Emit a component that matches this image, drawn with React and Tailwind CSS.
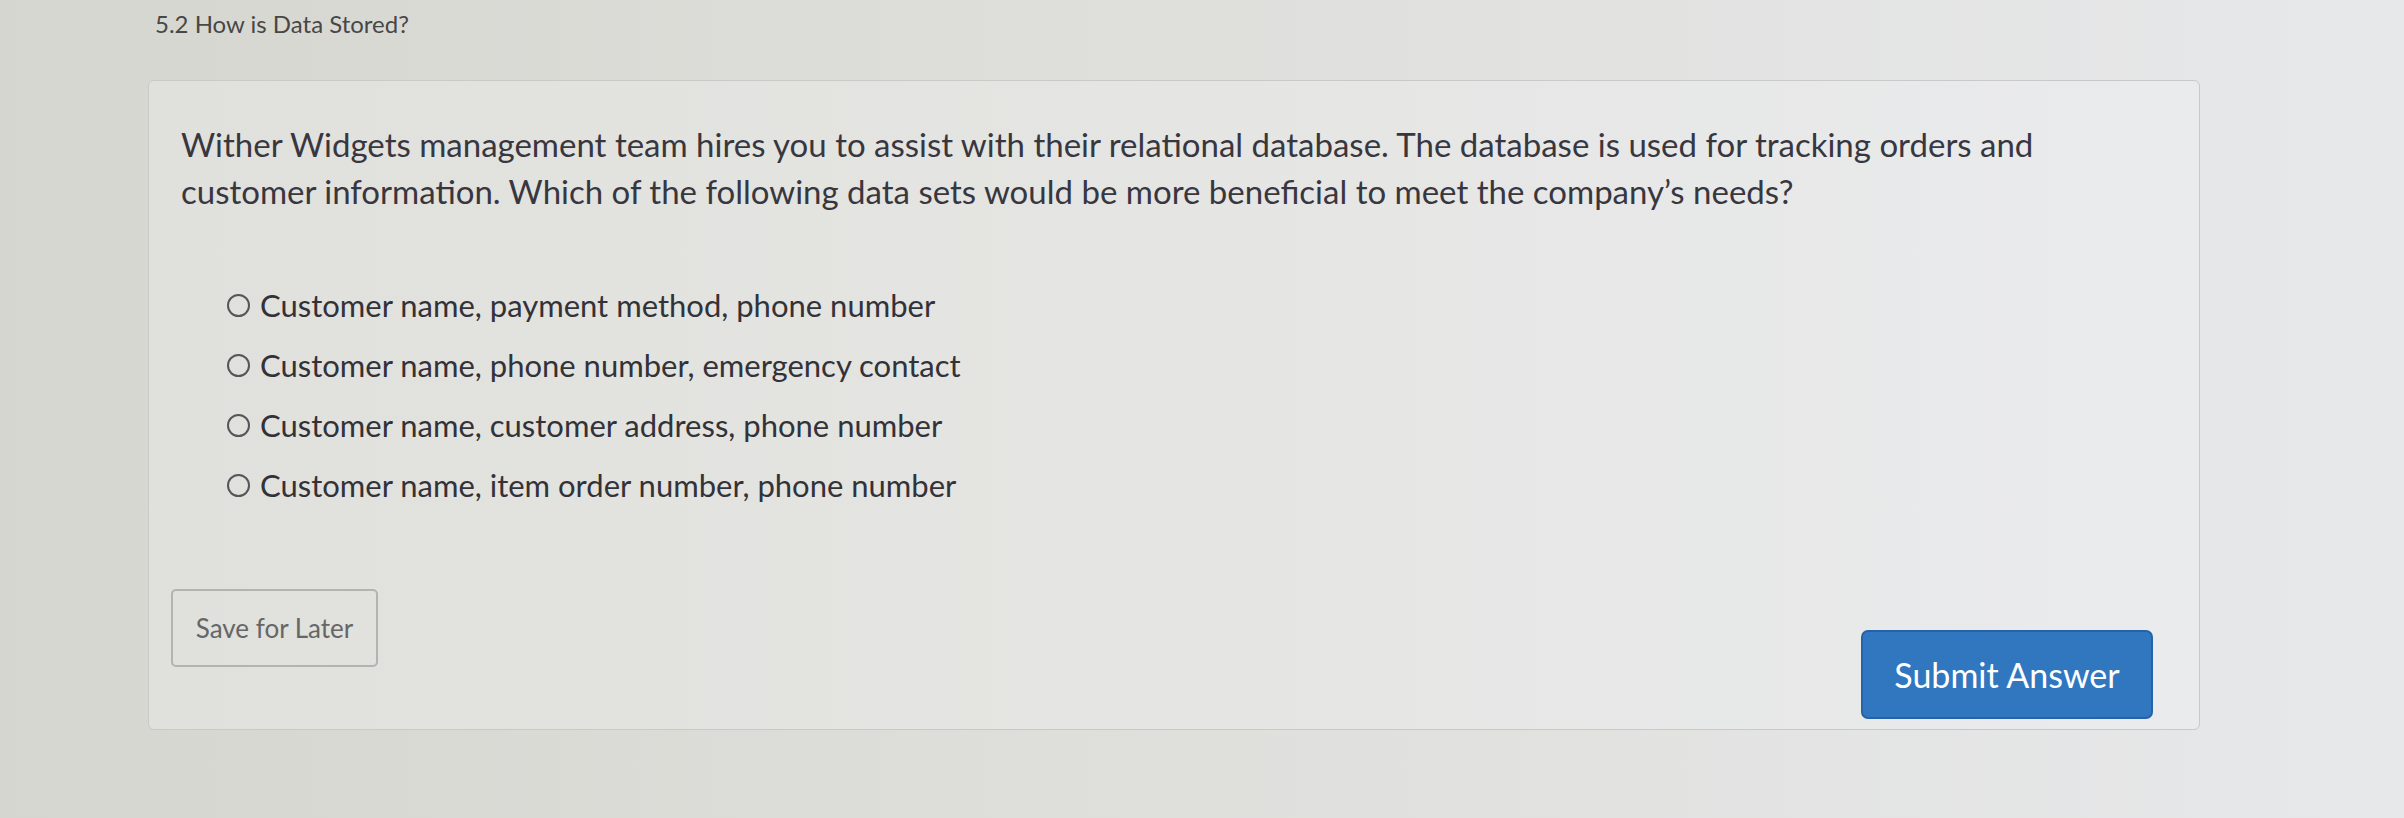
import React from 'react'

const OPTIONS = [
  'Customer name, payment method, phone number',
  'Customer name, phone number, emergency contact',
  'Customer name, customer address, phone number',
  'Customer name, item order number, phone number',
]

export default function App() {
  return (
    <div
      className="w-[2404px] h-[818px] overflow-hidden bg-gradient-to-r from-[#d6d6d0] via-[#dfdfdc] to-[#e7e8ea] text-[#3b3b40]"
      style={{ fontFamily: 'Lato, "Open Sans", sans-serif' }}
    >
      {/* Titre de la question */}
      <div className="pl-[155px] pt-[9px] text-[24px] leading-[30px] text-[#474747]">
        5.2 How is Data Stored?
      </div>

      {/* Carte */}
      <div className="ml-[148px] mt-[41px] w-[2052px] h-[650px] rounded-[6px] border border-[#c9c9c7] bg-gradient-to-r from-[#e0e0dc] via-[#e5e5e3] to-[#eaebed] pl-[22px] pr-[46px] pt-[40px]">
        <p className="ml-[10px] text-[33px] leading-[47px] text-[#38373f] max-w-[1960px]">
          Wither Widgets management team hires you to assist with their relational database. The database is used for tracking orders and customer information. Which of the following data sets would be more beneficial to meet the company’s needs?
        </p>

        <div className="mt-[60px] ml-[56px] flex flex-col">
          {OPTIONS.map(o => (
            <label key={o} className="flex items-center gap-[10px] h-[60px] text-[31px] text-[#323238]">
              <span className="w-[23px] h-[23px] rounded-full border-2 border-[#55555a] bg-transparent shrink-0" />
              <span>{o}</span>
            </label>
          ))}
        </div>

        <div className="mt-[74px] flex justify-between items-start">
          <button className="w-[207px] h-[78px] rounded-[5px] border-2 border-[#b3b3b1] text-[26px] text-[#666666] bg-transparent">
            Save for Later
          </button>
          <button className="mt-[41px] w-[292px] h-[89px] rounded-[7px] border-2 border-[#2562a8] bg-[#3077c0] text-white text-[34px]">
            Submit Answer
          </button>
        </div>
      </div>
    </div>
  )
}
